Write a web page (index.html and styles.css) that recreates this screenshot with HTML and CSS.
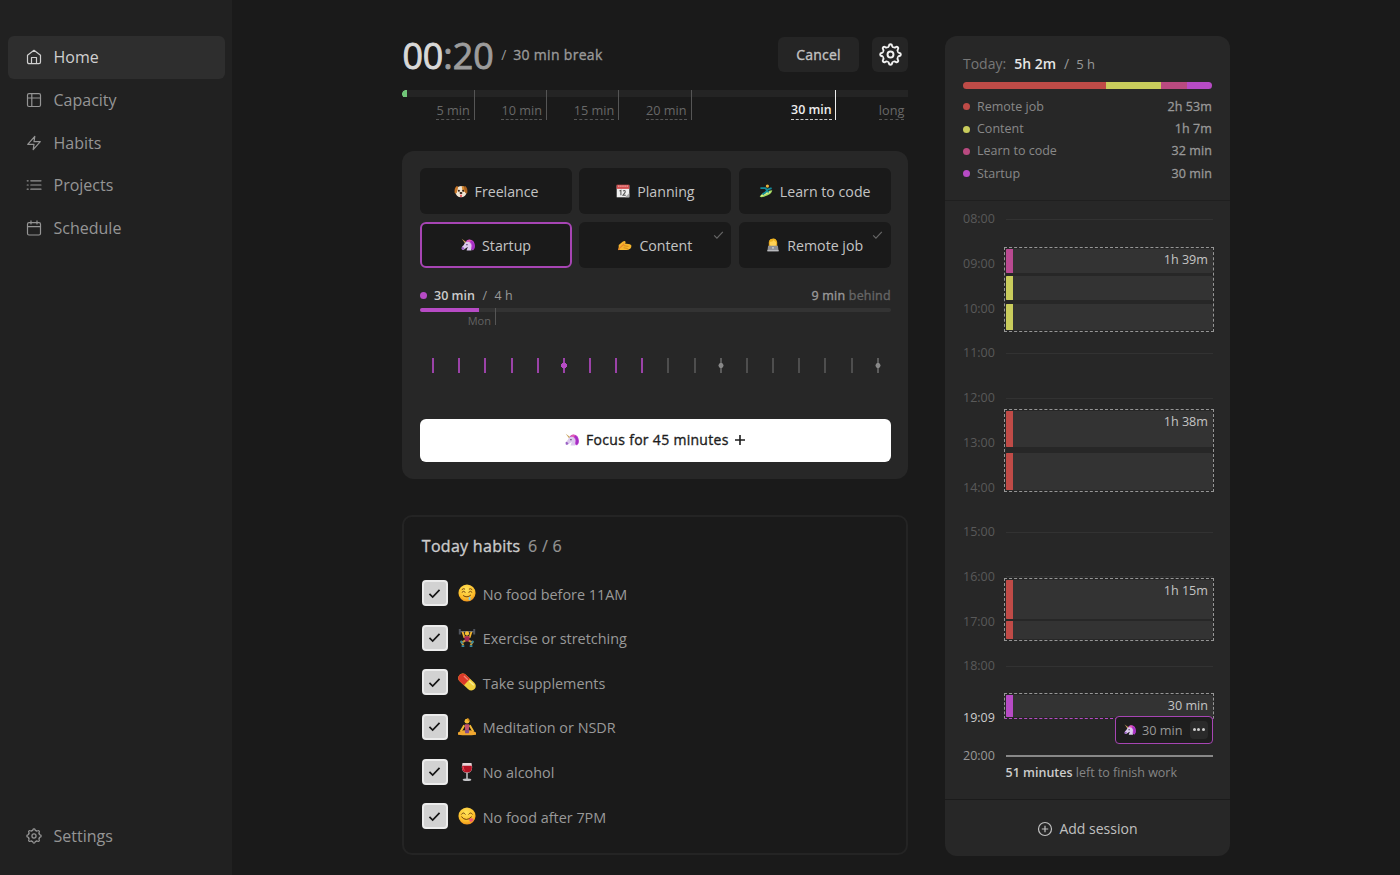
FILE: index.html
```html
<!DOCTYPE html>
<html lang="en">
<head>
<meta charset="utf-8">
<title>Home</title>
<link rel="stylesheet" href="styles.css">
</head>
<body>
<svg class="defs" aria-hidden="true">
  <defs>
    <path id="tooth" d="M-2.9-7C-2.1-6.7-1.6-7.3-1.4-8.2Q-1.2-9.4 0-9.4Q1.2-9.4 1.4-8.2C1.6-7.3 2.1-6.7 2.9-7"/>
    <symbol id="gear" viewBox="-10.5 -10.5 21 21">
      <use href="#tooth"/><use href="#tooth" transform="rotate(45)"/><use href="#tooth" transform="rotate(90)"/><use href="#tooth" transform="rotate(135)"/>
      <use href="#tooth" transform="rotate(180)"/><use href="#tooth" transform="rotate(225)"/><use href="#tooth" transform="rotate(270)"/><use href="#tooth" transform="rotate(315)"/>
      <circle r="2.7"/>
    </symbol>
    <symbol id="check" viewBox="0 0 14 12"><path d="M1.5 6.5L5 10L12.5 2"/></symbol>
    <symbol id="unicorn" viewBox="0 0 20 20">
      <path d="M1 1L8 6L6 8Z" fill="#c9a35c"/>
      <path d="M7 5C9 1 15 1 18 5C21 10 20 15 17 18L11 12Z" fill="#c03fd0"/>
      <path d="M8 4Q12 1 15 4L12 7Z" fill="#e25bb0"/>
      <path d="M7 6C11 4 15 7 15 11Q14 14 15 18H8Q8 16 10 13Q7 14 5 16Q2 18 1 15Q1 12 4 10Q5 7 7 6Z" fill="#dcc9ed"/>
      <path d="M1 13Q4 12 5 15Q3 18 1 16Z" fill="#9a62c4"/>
      <path d="M13 5Q18 8 15 17L19 15Q20 8 15 4Z" fill="#a32fc4"/>
      <circle cx="8.5" cy="9.500" r="1" fill="#3c2450"/>
    </symbol>
    <symbol id="dog" viewBox="0 0 20 20">
      <circle cx="10" cy="11" r="8" fill="#f1e5d3"/>
      <path d="M11 3Q17 3 17 10Q14 13 12 9Z" fill="#d48a32"/>
      <path d="M4 3Q0 6 1 13Q4 15 5 9L6 4Z" fill="#c9782a"/><path d="M16 3Q20 6 19 13Q16 15 15 9L14 4Z" fill="#a9601e"/>
      <circle cx="7" cy="9.500" r="1.400" fill="#2a1a10"/><circle cx="13" cy="9.500" r="1.400" fill="#2a1a10"/>
      <ellipse cx="10" cy="13" rx="2" ry="1.400" fill="#2a1a10"/><path d="M8.500 15.500H11.500V18Q10 19.500 8.500 18Z" fill="#e55d62"/>
    </symbol>
    <symbol id="calendar" viewBox="0 0 20 20">
      <path d="M1 2H19V19H1Z" fill="#eeeeee"/><path d="M1 1H19V7H1Z" fill="#d34f50"/>
      <path d="M3 3H17" stroke="#efaaa8" stroke-width="1.500" stroke-dasharray="2 1"/>
      <path d="M5 10L7 9V16M10 10Q14 8 13 12L10 16H14" fill="none" stroke="#555" stroke-width="1.500"/><path d="M13 19L19 13V19Z" fill="#aaa"/>
    </symbol>
    <symbol id="surf" viewBox="0 0 20 20">
      <path d="M1 18Q5 11 19 9Q18 15 8 18Q3 20 1 18Z" fill="#a4dd65"/><path d="M3 17L16 11" stroke="#e9ed91" stroke-width="1.500"/>
      <circle cx="12" cy="3" r="2.300" fill="#e8b33c"/>
      <path d="M2 6L9 6L12 9L9 12L5 15M12 8L18 6M11 9L14 12" fill="none" stroke="#138d9b" stroke-width="2.600" stroke-linejoin="round"/>
    </symbol>
    <symbol id="write" viewBox="0 0 20 20">
      <path d="M1 10L7 5Q10 3 11 6L10 8L17 9Q20 10 19 13Q18 17 12 17H2Q0 15 1 12Z" fill="#f4b52d"/>
      <path d="M8 11L15 12M8 14L14 15" stroke="#c97912" stroke-width="1"/><path d="M0 17L9 8" stroke="#e9852d" stroke-width="1.600"/>
    </symbol>
    <symbol id="laptop" viewBox="0 0 20 20">
      <path d="M4 9Q3 1 10 1Q17 1 16 9V13H4Z" fill="#e9a91f"/><ellipse cx="10" cy="7.500" rx="4.600" ry="5" fill="#ffd255"/>
      <path d="M5 5Q10 6 11 3Q13 6 15 5Q14 0 10 1Q5 1 5 5" fill="#efb421"/>
      <path d="M3 11H17L18 19H2Z" fill="#8e9095"/><path d="M2 17H18V19H2Z" fill="#b9babd"/><circle cx="10" cy="14" r="1.200" fill="#ddd"/>
    </symbol>
    <radialGradient id="face" cx=".45" cy=".3" r=".75"><stop offset="0" stop-color="#ffe45b"/><stop offset=".65" stop-color="#fcbf2b"/><stop offset="1" stop-color="#ed8b19"/></radialGradient>
    <symbol id="drool" viewBox="0 0 20 20">
      <circle cx="10" cy="10" r="9.500" fill="url(#face)"/>
      <path d="M4.500 6Q6 4.500 7.500 5.500M12.500 5.500Q14 4.500 15.500 6M4.500 9Q6 7 8 9M12 9Q14 7 15.500 9M6 13Q10 16 14 12.500" fill="none" stroke="#71400e" stroke-width="1.100" stroke-linecap="round"/>
      <path d="M12 14.500Q14.500 14 14 17Q13 19 11.800 17.500Z" fill="#79cbed"/>
    </symbol>
    <symbol id="yum" viewBox="0 0 20 20">
      <circle cx="10" cy="10" r="9.500" fill="url(#face)"/>
      <path d="M4 8Q6 5 8 8M12 8Q14 5 16 8M4 11Q9 17 15 11" fill="none" stroke="#71400e" stroke-width="1.100" stroke-linecap="round"/>
      <path d="M12 14Q14 11.500 17 13Q17 16.500 13.500 16.500Z" fill="#ee5572"/>
    </symbol>
    <symbol id="lift" viewBox="0 0 20 20">
      <path d="M2 3H18" stroke="#737984" stroke-width="1.200"/><path d="M2 0V6M18 0V6" stroke="#50545d" stroke-width="2.200"/>
      <path d="M5 3L7 9H13L15 3" fill="none" stroke="#f1b42d" stroke-width="2"/><circle cx="10" cy="5" r="2.400" fill="#f6bd36"/>
      <path d="M7 8H13L12.500 14H7.500Z" fill="#a32655"/><path d="M8 13L4 15L6 18M12 13L16 15L14 18" fill="none" stroke="#c89b3a" stroke-width="2.200"/>
      <path d="M3 13L5 16M17 13L15 16M4 19H7M13 19H16" stroke="#3489a0" stroke-width="2"/>
    </symbol>
    <symbol id="pill" viewBox="0 0 20 20">
      <g transform="rotate(43 10 10)"><rect x="-1.500" y="5" width="23" height="10" rx="5" fill="#f0cf3d"/><path d="M10 5H3.500A5 5 0 0 0 3.500 15H10Z" fill="#db3929"/><path d="M3 7.500H9" stroke="#f28772" stroke-width="1.500"/><path d="M11 7.500H18" stroke="#faec92" stroke-width="1.500"/></g>
    </symbol>
    <symbol id="yoga" viewBox="0 0 20 20">
      <circle cx="10" cy="3.500" r="2.700" fill="#f4ba35"/><path d="M10 0Q13 0 13 4L11 3Z" fill="#d18a1b"/>
      <path d="M7 8L3 15M13 8L17 15" stroke="#f4ba35" stroke-width="2.200"/><path d="M7.500 7H12.500L12 14H8Z" fill="#c0506c"/>
      <path d="M0 16Q7 12 10 15Q13 12 20 16V18.500Q10 20 0 18.500Z" fill="#f0a730"/><path d="M7.500 14Q10 12.500 12.500 14L12 17H8Z" fill="#824e91"/>
    </symbol>
    <symbol id="wine" viewBox="0 0 20 20">
      <path d="M5 0H15Q18 11 10 11Q2 11 5 0Z" fill="#e7d5d8"/><path d="M4.700 3H15.300Q16.500 10.500 10 10.500Q3.500 10.500 4.700 3Z" fill="#b51224"/>
      <path d="M6 4Q5.500 7 7.500 8.500" fill="none" stroke="#ed5260" stroke-width="1"/><path d="M10 11V18" stroke="#c3c3c6" stroke-width="1.700"/><ellipse cx="10" cy="18.500" rx="4.800" ry="1.400" fill="#c3c3c6"/>
    </symbol>
  </defs>
</svg>

<div class="app">
  <aside class="sidebar">
    <nav class="nav">
      <a class="nav-item active"><svg class="ico" viewBox="0 0 16 16"><path d="M1.500 6.200L8 1.300L14.500 6.200V13Q14.500 14.700 12.800 14.700H3.200Q1.500 14.700 1.500 13ZM5.500 14.700V8.500H10.500V14.700"/></svg>Home</a>
      <a class="nav-item"><svg class="ico" viewBox="0 0 16 16"><rect x="1.500" y="1.700" width="13" height="12.800" rx="1.500"/><path d="M1.500 6H14.500M5.800 1.700V14.500"/></svg>Capacity</a>
      <a class="nav-item"><svg class="ico" viewBox="0 0 16 16"><path d="M8.800 1.400L1.700 9.300H8L7.200 14.600L14.300 6.700H8Z"/></svg>Habits</a>
      <a class="nav-item"><svg class="ico" viewBox="0 0 16 16"><path d="M4.800 3.800H15M4.800 8H15M4.800 12.200H15M1.200 3.800H2.200M1.200 8H2.200M1.200 12.200H2.200"/></svg>Projects</a>
      <a class="nav-item"><svg class="ico" viewBox="0 0 16 16"><rect x="1.500" y="2.700" width="13" height="12.300" rx="1.500"/><path d="M1.500 6.700H14.500M5 .9V4M11 .9V4"/></svg>Schedule</a>
    </nav>
    <a class="nav-item"><svg class="ico gear-small"><use href="#gear"/></svg>Settings</a>
  </aside>

  <main class="main">
    <header class="timer">
      <div class="clock">00<span class="seconds">:20</span></div>
      <span class="slash">/</span><span class="break-name medium">30 min break</span>
      <button class="btn cancel medium">Cancel</button>
      <button class="btn options"><svg class="gear-large"><use href="#gear"/></svg></button>
    </header>
    <div class="breaks">
      <div class="step elapsed"><span>5 min</span></div>
      <div class="step"><span>10 min</span></div>
      <div class="step"><span>15 min</span></div>
      <div class="step"><span>20 min</span></div>
      <div class="step blank"></div>
      <div class="step chosen"><span>30 min</span></div>
      <div class="step blank"><span>long</span></div>
    </div>

    <section class="focus">
      <div class="tasks">
        <button class="task"><svg class="emo"><use href="#dog"/></svg><span>Freelance</span></button>
        <button class="task"><svg class="emo"><use href="#calendar"/></svg><span>Planning</span></button>
        <button class="task"><svg class="emo"><use href="#surf"/></svg><span>Learn to code</span></button>
        <button class="task selected"><svg class="emo"><use href="#unicorn"/></svg><span>Startup</span></button>
        <button class="task"><svg class="emo"><use href="#write"/></svg><span>Content</span><svg class="done"><use href="#check"/></svg></button>
        <button class="task"><svg class="emo"><use href="#laptop"/></svg><span>Remote job</span><svg class="done"><use href="#check"/></svg></button>
      </div>
      <div class="stats">
        <i class="dot purple"></i><b>30 min</b><span class="of">/</span><span>4 h</span>
        <span class="behind medium">9 min <em>behind</em></span>
      </div>
      <div class="week"><div class="week-fill" style="width:12.5%"></div></div>
      <div class="day-mark">Mon</div>
      <div class="ticks">
        <i class="on"></i><i class="on"></i><i class="on"></i><i class="on"></i><i class="on"></i><i class="on knot"></i><i class="on"></i><i class="on"></i><i class="on"></i>
        <i></i><i></i><i class="knot"></i><i></i><i></i><i></i><i></i><i></i><i class="knot"></i>
      </div>
      <button class="start medium"><svg class="emo"><use href="#unicorn"/></svg>Focus for 45 minutes<svg class="plus" viewBox="0 0 12 12"><path d="M6 1V11M1 6H11"/></svg></button>
    </section>

    <section class="habits">
      <h2 class="medium">Today habits <span>6 / 6</span></h2>
      <ul>
        <li><span class="box"><svg><use href="#check"/></svg></span><svg class="emo"><use href="#drool"/></svg><span class="label">No food before 11AM</span></li>
        <li><span class="box"><svg><use href="#check"/></svg></span><svg class="emo"><use href="#lift"/></svg><span class="label">Exercise or stretching</span></li>
        <li><span class="box"><svg><use href="#check"/></svg></span><svg class="emo"><use href="#pill"/></svg><span class="label">Take supplements</span></li>
        <li><span class="box"><svg><use href="#check"/></svg></span><svg class="emo"><use href="#yoga"/></svg><span class="label">Meditation or NSDR</span></li>
        <li><span class="box"><svg><use href="#check"/></svg></span><svg class="emo"><use href="#wine"/></svg><span class="label">No alcohol</span></li>
        <li><span class="box"><svg><use href="#check"/></svg></span><svg class="emo"><use href="#yum"/></svg><span class="label">No food after 7PM</span></li>
      </ul>
    </section>
  </main>

  <aside class="panel">
    <section class="summary">
      <div class="total"><span>Today:</span><b>5h 2m</b><span class="of">/</span><span class="goal">5 h</span></div>
      <div class="split">
        <i class="red" style="width:57.3%"></i><i class="yellow" style="width:22.2%"></i><i class="pink" style="width:10.6%"></i><i class="purple" style="width:9.9%"></i>
      </div>
      <div class="line"><i class="dot red"></i>Remote job<b>2h 53m</b></div>
      <div class="line"><i class="dot yellow"></i>Content<b>1h 7m</b></div>
      <div class="line"><i class="dot pink"></i>Learn to code<b>32 min</b></div>
      <div class="line"><i class="dot purple"></i>Startup<b>30 min</b></div>
    </section>
    <section class="timeline">
      <div class="hour">08:00</div><div class="hour">09:00</div><div class="hour">10:00</div><div class="hour">11:00</div>
      <div class="hour">12:00</div><div class="hour">13:00</div><div class="hour">14:00</div><div class="hour">15:00</div>
      <div class="hour">16:00</div><div class="hour">17:00</div><div class="hour">18:00</div><div class="hour unlabelled"></div>
      <div class="hour end">20:00</div>
      <p class="left"><b>51 minutes</b> left to finish work</p>

      <div class="block" style="top:46px;height:85px"><i class="pink" style="flex:24"></i><i class="yellow" style="flex:24"></i><i class="yellow" style="flex:26"></i><span>1h 39m</span></div>
      <div class="block wide" style="top:208px;height:83px"><i class="red" style="flex:36"></i><i class="red" style="flex:37"></i><span>1h 38m</span></div>
      <div class="block narrow" style="top:377px;height:63px"><i class="red" style="flex:39"></i><i class="red" style="flex:18"></i><span>1h 15m</span></div>
      <div class="block live" style="top:492px;height:26px"><i class="purple" style="flex:1"></i><span>30 min</span></div>
      <div class="now" style="top:507px">19:09</div>
      <div class="current" style="top:515px"><svg class="emo"><use href="#unicorn"/></svg>30 min<span class="more"><i></i><i></i><i></i></span></div>
    </section>
    <button class="add"><svg viewBox="0 0 16 16"><circle cx="8" cy="8" r="6.500"/><path d="M8 4.800V11.200M4.800 8H11.200"/></svg>Add session</button>
  </aside>
</div>
</body>
</html>
```
FILE: styles.css
```css
* { box-sizing: border-box; }
body { margin: 0; background: #1a1a1a; color: #999; font: 13px/18px "Open Sans", "Noto Sans", sans-serif; overflow: hidden; }
button { font: inherit; color: inherit; border: 0; padding: 0; }
svg { display: block; flex: none; }
i, em { font-style: normal; }
b { font-weight: 600; }
.defs { position: absolute; width: 0; height: 0; }
.medium { -webkit-text-stroke: .35px currentColor; letter-spacing: .3px; }
.red { background: #bf4b47; }
.yellow { background: #c9cc5c; }
.pink { background: #b94a80; }
.purple { background: #b74bc5; }
.dot { width: 7px; height: 7px; border-radius: 50%; flex: none; }
.emo { width: 14px; height: 14px; }

.app { display: flex; height: 875px; }

/* Sidebar */
.sidebar { width: 232px; background: #212121; padding: 36px 7.5px 18px; display: flex; flex-direction: column; justify-content: space-between; }
.nav-item { display: flex; align-items: center; height: 42.7px; padding-left: 18px; gap: 12px; font-size: 16px; border-radius: 6px; color: #959595; }
.nav-item.active { background: #2e2e2e; color: #d0d0d0; }
.ico { width: 16px; height: 16px; fill: none; stroke: currentColor; stroke-width: 1.2; stroke-linejoin: round; stroke-linecap: round; }
.gear-small { stroke-width: 1.6; }

/* Timer and break length */
.main { width: 506px; margin-left: 170.4px; padding-top: 37px; }
.timer { display: flex; align-items: center; height: 35px; }
.clock { font-size: 35.8px; line-height: 36px; color: #d8d8d8; -webkit-text-stroke: .9px currentColor; }
.seconds { color: #9c9c9c; }
.slash { margin: 0 7px 0 7.5px; font-size: 14px; }
.break-name { font-size: 14px; }
.btn { background: #252525; border-radius: 6px; height: 35px; display: flex; align-items: center; justify-content: center; }
.cancel { width: 81px; margin-left: auto; margin-right: 13.4px; font-size: 14px; letter-spacing: .2px; color: #c2c2c2; }
.options { width: 36px; }
.gear-large { width: 23px; height: 23px; fill: none; stroke: #f2f2f2; stroke-width: 1.8; }
.breaks { display: grid; grid-template-columns: repeat(7, 1fr); height: 30px; margin-top: 18px; background: linear-gradient(#242424, #242424) 0 0 / 100% 7px no-repeat; }
.step { border-right: 1px solid #555; padding: 11px 4px 0 0; display: flex; justify-content: flex-end; font-size: 12.7px; color: #686868; }
.step span { height: 19px; border-bottom: 1px dashed #555; }
.step.blank { border-color: transparent; padding-right: 3px; }
.step.chosen { border-color: #eee; color: #eee; font-weight: 600; font-size: 12.4px; padding-right: 3.5px; }
.step.chosen span { border-color: #ccc; }
.step.elapsed { background: radial-gradient(circle at 4px 4px, #70c578 3.7px, transparent 4px) 0 0 / 5px 7px no-repeat; }

/* Focus card */
.focus { margin-top: 31px; height: 328px; background: #272727; border-radius: 12px; padding: 17px 17.6px; }
.tasks { display: grid; grid-template-columns: repeat(3, 1fr); column-gap: 7.2px; row-gap: 7.5px; }
.task { position: relative; display: flex; align-items: center; justify-content: center; gap: 7px; height: 46px; background: #1a1a1a; border-radius: 6px; font-size: 14.2px; color: #c4c4c4; }
.task span { padding-top: 2px; }
.task.selected { border: 2px solid #a745b4; }
.done { position: absolute; top: 8px; right: 7.5px; width: 11px; height: 10px; fill: none; stroke: #666; stroke-width: 1.5; }
.stats { display: flex; align-items: center; margin-top: 19px; font-size: 12.5px; }
.stats b { margin-left: 7px; color: #ccc; font-weight: 600; }
.of { margin: 0 8px; }
.stats .of { margin: 0 7.5px; }
.behind { margin-left: auto; letter-spacing: .2px; }
.behind em { color: #666; }
.week { height: 4px; margin-top: 3px; background: #333; border-radius: 2px; }
.week-fill { height: 4px; background: #b74bc5; border-radius: 2px 0 0 2px; }
.day-mark { width: 76px; height: 17px; margin-top: -4px; border-right: 1px solid #555; padding: 5px 4px 0 0; text-align: right; font-size: 11px; line-height: 15px; color: #636363; }
.ticks { display: grid; grid-template-columns: repeat(18, 1fr); justify-items: center; margin-top: 33px; }
.ticks i { width: 2px; height: 15px; background: #4e4e4e; }
.ticks .on { background: #9b42a8; }
.ticks .knot { width: 6px; background: radial-gradient(circle, #888 2.2px, transparent 2.8px), linear-gradient(90deg, transparent 2px, #5b5b5b 2px 4px, transparent 4px); }
.ticks .on.knot { background: radial-gradient(circle, #b74bc5 2.7px, transparent 3.2px), linear-gradient(90deg, transparent 2px, #9b42a8 2px 4px, transparent 4px); }
.start { display: flex; align-items: center; justify-content: center; width: 100%; height: 43px; margin-top: 46px; background: #fff; border-radius: 6px; color: #1d1d1d; font-size: 14px; }
.start .emo { margin-right: 7px; }
.plus { width: 12px; height: 12px; margin-left: 5px; fill: none; stroke: #1d1d1d; stroke-width: 1.6; }

/* Habits */
.habits { margin-top: 36px; height: 340px; border: 2px solid #242424; border-radius: 10px; padding: 19px 17.4px; }
.habits h2 { margin: 0; font-size: 16px; line-height: 20px; font-weight: 400; color: #ccc; }
.habits h2 span { margin-left: 3px; color: #949494; -webkit-text-stroke-width: .2px; }
.habits ul { list-style: none; margin: 14.9px 0 0; padding: 0; }
.habits li { display: flex; align-items: center; height: 44.6px; }
.habits .emo { width: 18px; height: 18px; margin: 0 7px 0 10px; }
.box { width: 26px; height: 26px; display: flex; align-items: center; justify-content: center; background: #d2d2d2; border: 2px solid #ececec; border-radius: 4px; }
.box svg { width: 13px; height: 11px; fill: none; stroke: #151515; stroke-width: 1.8; }
.label { font-size: 14.4px; padding-top: 3px; }

/* Day panel */
.panel { width: 285px; height: 820px; margin: 36.4px 0 0 36.6px; background: #272727; border-radius: 12px; display: flex; flex-direction: column; }
.summary { height: 164.5px; padding: 17.6px 18px 0; border-bottom: 1.5px solid #1f1f1f; }
.total { display: flex; align-items: center; height: 20px; font-size: 14px; color: #777; }
.total b { margin-left: 8px; color: #e6e6e6; }
.total .of, .goal { color: #999; }
.total .of { margin: 0 7px 0 8px; }
.goal { font-size: 13px; }
.split { display: flex; height: 7px; margin: 7.7px 0 6.8px; border-radius: 4px; overflow: hidden; }
.line { display: flex; align-items: center; height: 22.4px; font-size: 12.5px; color: #888; }
.line .dot { margin-right: 7px; }
.line b { margin-left: auto; font-weight: 400; -webkit-text-stroke: .3px currentColor; letter-spacing: .1px; color: #999; }
.timeline { position: relative; height: 599px; padding: 0 17px 0 18px; border-bottom: 1.5px solid #1b1b1b; }
.hour { display: flex; align-items: center; gap: 11px; height: 18px; margin-bottom: 26.73px; font-size: 12.5px; color: #595959; }
.hour:first-child { margin-top: 9.3px; }
.hour::after { content: ""; flex: 1; height: 1px; background: #323232; }
.unlabelled::after { margin-left: 43px; }
.hour.end { color: #999; margin-bottom: 0; }
.hour.end::after { background: #888; height: 1.5px; }
.left { margin: -.6px 0 0 42.5px; font-size: 12.5px; color: #858585; }
.left b { color: #ccc; }
.block { position: absolute; left: 59px; width: 210px; border: 1px dashed #969696; padding: 1px 0; background: #272727; display: flex; flex-direction: column; gap: 3.5px; }
.block.wide { gap: 6px; }
.block.narrow { gap: 2px; }
.block i { background: linear-gradient(90deg, transparent 1px, var(--bar) 1px 8px, #333 8px); border-radius: 2px; }
.block .red { --bar: #bf4b47; }
.block .yellow { --bar: #c9cc5c; }
.block .pink { --bar: #b94a91; }
.block .purple { --bar: #b74bc5; }
.block span { position: absolute; top: 3px; right: 5px; font-size: 12.6px; color: #c4c4c4; }
.live { border-bottom-color: #b74bc5; }
.now { position: absolute; left: 18px; width: 36px; height: 20px; line-height: 20px; background: #272727; font-size: 12.5px; color: #ccc; }
.current { position: absolute; right: 17px; width: 98px; height: 28px; display: flex; align-items: center; padding-left: 8px; background: #1e1e1e; border: 1.5px solid #a745b4; border-radius: 4px; font-size: 12.7px; line-height: 16px; color: #999; }
.current .emo { width: 12px; height: 12px; margin-right: 6px; }
.more { display: flex; gap: 1.5px; align-items: center; justify-content: center; width: 18px; height: 18px; margin-left: 7px; background: #2a2a2a; border-radius: 4px; }
.more i { width: 3px; height: 3px; border-radius: 50%; background: #ccc; }
.add { flex: 1; display: flex; align-items: center; justify-content: center; gap: 6px; background: none; font-size: 14px; color: #c0c0c0; padding-top: 1px; }
.add svg { width: 16px; height: 16px; fill: none; stroke: #c0c0c0; stroke-width: 1.2; }
```
